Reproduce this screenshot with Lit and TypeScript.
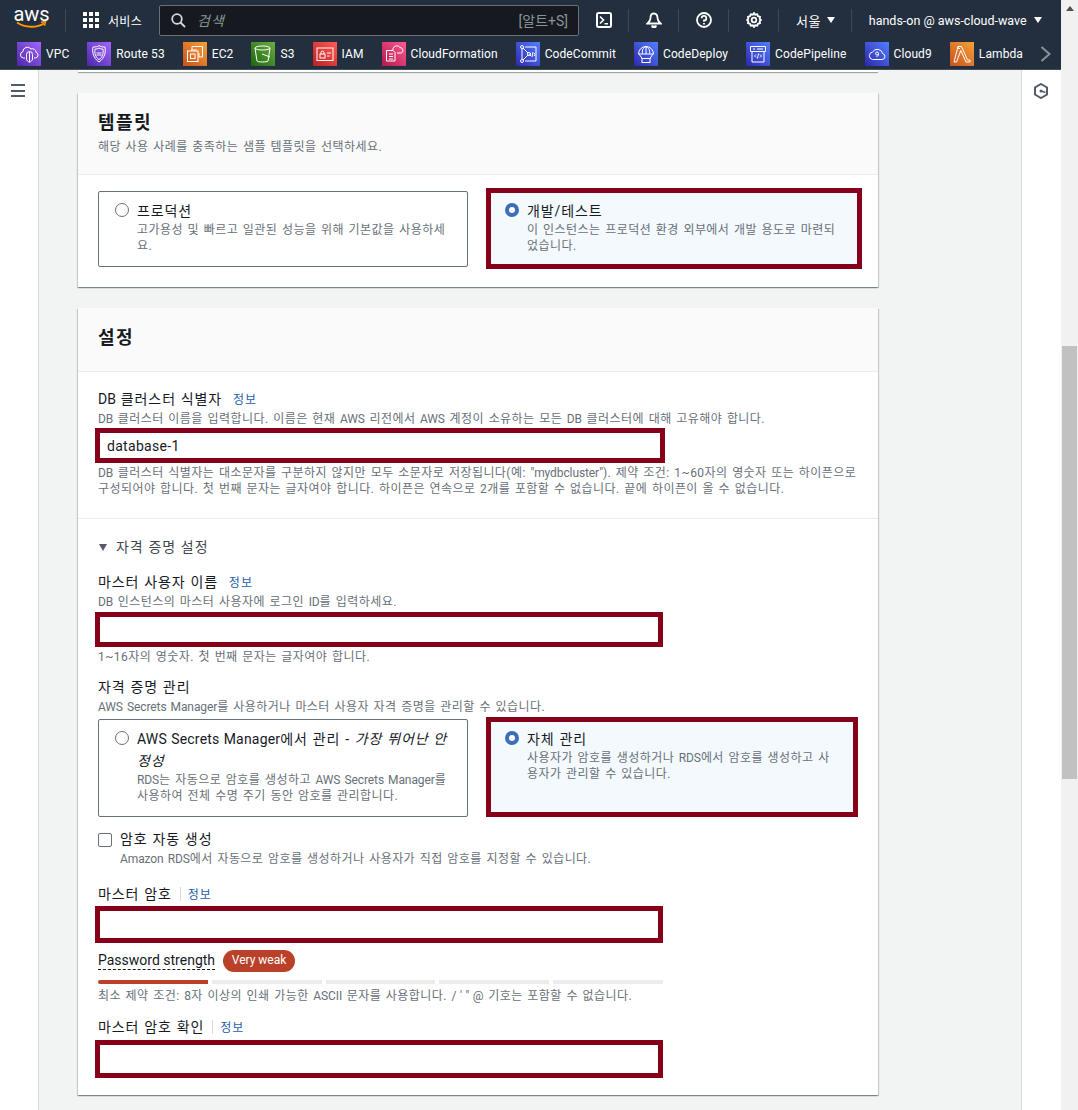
import { LitElement, css, html, svg } from "lit";
import { customElement } from "lit/decorators.js";

const services = [
  { name: "VPC", tone: "purple", icon: svg`<path d="M8 16H6.500a3.200 3.200 0 0 1-.6-6.300A4.500 4.500 0 0 1 14 7a3.600 3.600 0 0 1 5 3.200 3 3 0 0 1-.5 5.800H17"/><path d="M9.500 12.500a3 3 0 0 1 6 0v4.500c0 1.500-1.500 2.500-3 3.300-1.500-.8-3-1.800-3-3.300z"/><path d="M12.500 10v10"/>` },
  { name: "Route 53", tone: "purple", icon: svg`<path d="M12 3.500c1.500 1.300 3.200 1.500 6 1.500 1 5-.2 11-6 15-5.800-4-7-10-6-15 2.800 0 4.500-.2 6-1.500z"/><path d="M12 6c1 .8 2.200 1.100 4 1.100.6 3.700-.2 8-4 10.500-3.800-2.500-4.600-6.800-4-10.500 1.800 0 3-.3 4-1.100z"/><path d="M9.500 11h5M9.500 13h5"/>` },
  { name: "EC2", tone: "orange", icon: svg`<path d="M9 8V4.500h10.500V15H16"/><rect x="4.500" y="9" width="10.500" height="10.500"/><rect x="7.500" y="12" width="4.500" height="4.500"/><path d="M9 7v2M11 7v2M13 7v2M15 12h2M15 14h2"/>` },
  { name: "S3", tone: "green", icon: svg`<ellipse cx="11.500" cy="6" rx="7.500" ry="2"/><path d="M4 6l2 13c.5 1.300 10 1.300 11 0l2-13"/><path d="M11 12l8 3"/>` },
  { name: "IAM", tone: "red", icon: svg`<rect x="4" y="6" width="16" height="12.500"/><rect x="7" y="12" width="5" height="4"/><path d="M8 12v-1.500a1.500 1.500 0 0 1 3 0V12M14 11h4M14 14h2.500"/>` },
  { name: "CloudFormation", tone: "pink", icon: svg`<path d="M11 8V6.500a4 4 0 0 1 7-1 3 3 0 0 1 1.500 5.500H15"/><path d="M4.500 8.500H11l2 2v8.500H4.500z"/><path d="M7 12h4M7 14.500h4M7 17h4"/>` },
  { name: "CodeCommit", tone: "blue", icon: svg`<circle cx="6" cy="5" r="1.500"/><circle cx="6" cy="19" r="1.500"/><circle cx="13" cy="12" r="1.500"/><path d="M6 6.500v11M7 6l5 5M12 13l-5 5"/><path d="M9 5h11v14H9"/><path d="M15 14l-1.500-1.500L15 11M18 14l1-1.500L18 11M16 15l1-5"/>` },
  { name: "CodeDeploy", tone: "blue", icon: svg`<path d="M4.500 12a7.500 7.500 0 0 1 15 0z"/><path d="M12 4.500c-5 2-3.500 7.500-3.500 7.500M12 4.500c5 2 3.500 7.500 3.500 7.500M12 4.500V12"/><path d="M5 12l3.500 5M19 12l-3.500 5"/><rect x="8" y="16.500" width="8" height="4"/>` },
  { name: "CodePipeline", tone: "blue", icon: svg`<path d="M4.500 4.500h15v5h-15z"/><path d="M6 9.500v10.500h12V9.500"/><path d="M7 7h2M11 7h6"/><path d="M10 15.500l-1.500-1.500 1.500-1.500M14 15.500l1.500-1.500-1.500-1.500M11.300 16.500l1.400-5"/>` },
  { name: "Cloud9", tone: "blue", icon: svg`<path d="M7.500 17.500h9.500a3 3 0 0 0 .7-5.900A5.500 5.500 0 0 0 7.600 10a3.800 3.800 0 0 0-.1 7.500z"/><circle cx="12" cy="11.500" r="1.500"/><path d="M13.500 11.500c0 2-.7 3-2 3.300"/>` },
  { name: "Lambda", tone: "orange", icon: svg`<path d="M8 4.500h3.500l6 13.500H20v2h-4l-5.200-11.500L6.500 20H4z"/><path d="M8 4.500v2h2"/>` },
];

const input = (wide = false, value = "", tall = "") =>
  html`<div class="input ${wide ? "wide" : ""} ${tall}">${value}</div>`;

const radio = (on: boolean) => html`<span class="radio ${on ? "on" : ""}"></span>`;

@customElement("app-root")
export class AppRoot extends LitElement {
  renderNav() {
    return html`
      <header class="nav">
        <div class="top">
          <div class="logo">
            <span>aws</span>
            <svg width="31" height="8" viewBox="0 0 31 8" fill="none">
              <path d="M1 1.500c8 5.500 20 5.500 27 1" stroke="#f90" stroke-width="1.800"/>
              <path d="M25 1.200l4.500-.5-1 4" stroke="#f90" stroke-width="1.500"/>
            </svg>
          </div>
          <i class="sep first"></i>
          <div class="grid-icon">${Array.from({ length: 9 }, () => html`<b></b>`)}</div>
          <span class="services">서비스</span>
          <div class="search">
            <svg width="15" height="15" viewBox="0 0 15 15" fill="none" stroke="#d5dbdb" stroke-width="1.800">
              <circle cx="6" cy="6" r="4.800"/><path d="M9.500 9.500l4.500 4.500"/>
            </svg>
            <em>검색</em>
            <span>[알트+S]</span>
          </div>
          <svg class="tool shell" width="16" height="16" viewBox="0 0 16 16" fill="none" stroke="#fff" stroke-width="2">
            <rect x="1" y="1" width="14" height="14" rx="1.500"/><path d="M4 4.500L7.500 8 4 11.500M8.500 11.800h3.500" stroke-width="1.600"/>
          </svg>
          <i class="sep"></i>
          <svg class="tool" width="16" height="16" viewBox="0 0 16 16" fill="none" stroke="#fff" stroke-width="1.800">
            <path d="M8 1.500c-2.500 0-3.500 2-3.500 4.500 0 2.500-1.300 4-3 5.500h13c-1.700-1.500-3-3-3-5.500 0-2.500-1-4.500-3.500-4.500z"/><path d="M6 13.500a2 2 0 0 0 4 0" fill="#fff"/>
          </svg>
          <i class="sep"></i>
          <svg class="tool" width="16" height="16" viewBox="0 0 16 16" fill="none" stroke="#fff" stroke-width="1.800">
            <circle cx="8" cy="8" r="7"/><path d="M5.700 6.200A2.300 2.300 0 1 1 8 8.500v1.300M8 11v1.600"/>
          </svg>
          <i class="sep"></i>
          <svg class="tool" width="16" height="16" viewBox="0 0 16 16" fill="none" stroke="#fff" stroke-width="1.800">
            <path d="M8 1l1.200 1.700 2-.4.800 1.900 2 .6-.3 2L15 8l-1.300 1.200.3 2-2 .6-.8 1.900-2-.4L8 15l-1.200-1.700-2 .4-.8-1.900-2-.6.300-2L1 8l1.300-1.200-.3-2 2-.6.800-1.900 2 .4z"/><circle cx="8" cy="8" r="2.300"/>
          </svg>
          <i class="sep"></i>
          <span class="menu region">서울<u></u></span>
          <i class="sep"></i>
          <span class="menu account">hands-on @ aws-cloud-wave<u></u></span>
        </div>
        <div class="bar">
          ${services.map(
            (s) => html`
              <div class="svc">
                <span class="svc-icon ${s.tone}">
                  <svg width="24" height="24" viewBox="0 0 24 24" fill="none" stroke="#fff" stroke-width="1">${s.icon}</svg>
                </span>
                <span>${s.name}</span>
              </div>
            `
          )}
          <svg class="more" width="11" height="16" viewBox="0 0 11 16" fill="none" stroke="#879596" stroke-width="2"><path d="M1.500 1l8 7-8 7"/></svg>
        </div>
      </header>
    `;
  }

  renderTemplates() {
    return html`
      <section class="card">
        <div class="card-head tall">
          <h2>템플릿</h2>
          <p class="hint">해당 사용 사례를 충족하는 샘플 템플릿을 선택하세요.</p>
        </div>
        <div class="card-body">
          <div class="tiles">
            <div class="tile row1">
              ${radio(false)}
              <div><div class="tile-title">프로덕션</div><p class="hint">고가용성 및 빠르고 일관된 성능을 위해 기본값을 사용하세요.</p></div>
            </div>
            <div class="tile picked row1">
              ${radio(true)}
              <div><div class="tile-title">개발/테스트</div><p class="hint">이 인스턴스는 프로덕션 환경 외부에서 개발 용도로 마련되었습니다.</p></div>
            </div>
          </div>
        </div>
      </section>
    `;
  }

  renderSettings() {
    return html`
      <section class="card settings">
        <div class="card-head"><h2>설정</h2></div>
        <div class="block identifier">
          <div class="label"><span class="en">DB</span> 클러스터 식별자 <a>정보</a></div>
          <p class="hint"><span class="en">DB</span> 클러스터 이름을 입력합니다. 이름은 현재 <span class="en">AWS</span> 리전에서 <span class="en">AWS</span> 계정이 소유하는 모든 <span class="en">DB</span> 클러스터에 대해 고유해야 합니다.</p>
          ${input(true, "database-1")}
          <p class="hint after"><span class="en">DB</span> 클러스터 식별자는 대소문자를 구분하지 않지만 모두 소문자로 저장됩니다(예: <span class="en">"mydbcluster"</span>). 제약 조건: 1~60자의 영숫자 또는 하이픈으로 구성되어야 합니다. 첫 번째 문자는 글자여야 합니다. 하이픈은 연속으로 2개를 포함할 수 없습니다. 끝에 하이픈이 올 수 없습니다.</p>
        </div>
        <div class="block credentials">
          <div class="expander"><u></u>자격 증명 설정</div>
          <div class="label user">마스터 사용자 이름 <a>정보</a></div>
          <p class="hint"><span class="en">DB</span> 인스턴스의 마스터 사용자에 로그인 <span class="en">ID</span>를 입력하세요.</p>
          ${input()}
          <p class="hint after">1~16자의 영숫자. 첫 번째 문자는 글자여야 합니다.</p>
          <div class="label manage">자격 증명 관리</div>
          <p class="hint"><span class="en">AWS Secrets Manager</span>를 사용하거나 마스터 사용자 자격 증명을 관리할 수 있습니다.</p>
          <div class="tiles second">
            <div class="tile row2">
              ${radio(false)}
              <div>
                <div class="tile-title"><span class="en">AWS Secrets Manager</span>에서 관리 - <em>가장 뛰어난 안정성</em></div>
                <p class="hint"><span class="en">RDS</span>는 자동으로 암호를 생성하고 <span class="en">AWS Secrets Manager</span>를 사용하여 전체 수명 주기 동안 암호를 관리합니다.</p>
              </div>
            </div>
            <div class="tile picked row2">
              ${radio(true)}
              <div><div class="tile-title">자체 관리</div><p class="hint">사용자가 암호를 생성하거나 <span class="en">RDS</span>에서 암호를 생성하고 사용자가 관리할 수 있습니다.</p></div>
            </div>
          </div>
          <div class="check">
            <span class="box"></span>
            <div><div class="label">암호 자동 생성</div><p class="hint"><span class="en">Amazon RDS</span>에서 자동으로 암호를 생성하거나 사용자가 직접 암호를 지정할 수 있습니다.</p></div>
          </div>
          <div class="label pass">마스터 암호<i class="divider"></i><a>정보</a></div>
          ${input(false, "", "mid")}
          <div class="strength">
            <span class="dashed">Password strength</span>
            <span class="badge">Very weak</span>
          </div>
          <div class="meter"><b class="filled"></b><b></b><b></b><b></b><b></b></div>
          <p class="hint constraint">최소 제약 조건: 8자 이상의 인쇄 가능한 <span class="en">ASCII</span> 문자를 사용합니다. <span class="sym">/ ' " @</span> 기호는 포함할 수 없습니다.</p>
          <div class="label confirm">마스터 암호 확인<i class="divider"></i><a>정보</a></div>
          ${input(false, "", "big")}
        </div>
      </section>
    `;
  }

  render() {
    return html`
      <div class="page">
        <div class="viewport">
          ${this.renderNav()}
          <div class="content">
            <aside class="left"><i></i><i></i><i></i></aside>
            <main>
              <div class="stub"></div>
              ${this.renderTemplates()}
              ${this.renderSettings()}
            </main>
            <aside class="right">
              <svg width="14" height="16" viewBox="0 0 14 16" fill="none" stroke="#545b64" stroke-width="2">
                <path d="M7 1l6 3.500v7L7 15l-6-3.500v-7z"/><circle cx="7" cy="8" r="1.500" fill="#545b64" stroke="none"/><path d="M7 8l4.500 1.500" stroke-width="1.500"/>
              </svg>
            </aside>
          </div>
        </div>
        <div class="scrollbar"><span class="arrow"></span><span class="thumb"></span></div>
      </div>
    `;
  }

  static styles = css`
    :host {
      display: block;
      font-family: Roboto, "Noto Sans CJK KR", sans-serif;
      font-size: 14px;
      color: #16191f;
    }

    * {
      box-sizing: border-box;
    }

    .page {
      display: flex;
      width: 1078px;
      height: 1110px;
      overflow: hidden;
    }

    .viewport {
      width: 1061px;
      display: flex;
      flex-direction: column;
    }

    .scrollbar {
      width: 17px;
      background: #f1f1f1;
      display: flex;
      flex-direction: column;
      align-items: center;
    }

    .arrow {
      margin-top: 6px;
      border: 4px solid transparent;
      border-top: 0;
      border-bottom: 5px solid #505050;
    }

    .thumb {
      width: 15px;
      height: 433px;
      margin-top: 335px;
      background: #c1c1c1;
    }

    .nav {
      height: 70px;
      flex: none;
      background: #232f3e;
      border-bottom: 1px solid #454f5b;
      color: #fff;
    }

    .top {
      height: 40px;
      display: flex;
      align-items: center;
      padding-left: 16px;
    }

    .logo {
      width: 31px;
      display: flex;
      flex-direction: column;
      align-items: center;
      line-height: 15px;
      font-size: 20px;
      margin-top: -4px;
    }

    .logo svg {
      margin-top: -1px;
    }

    .sep {
      width: 1px;
      height: 23px;
      background: #414750;
      margin: 0 17px 0 16px;
    }

    .sep.first {
      margin: 0 17px 0 18px;
    }

    .grid-icon {
      display: grid;
      grid-template-columns: repeat(3, 4px);
      gap: 2px;
    }

    .grid-icon b {
      height: 4px;
      background: #fff;
    }

    .services {
      font-size: 12px;
      letter-spacing: 0.3px;
      margin-left: 9px;
    }

    .search {
      width: 420px;
      height: 31px;
      margin: 0 17px;
      padding: 0 10px 0 11px;
      display: flex;
      align-items: center;
      background: #16191f;
      border: 1px solid #687078;
      border-radius: 2px;
      color: #879596;
      font-size: 14px;
    }

    .search em {
      margin-left: 11px;
      flex: 1;
      letter-spacing: 1px;
    }

    .tool {
      flex: none;
    }

    .menu {
      font-size: 12.5px;
      display: flex;
      align-items: center;
      gap: 7px;
    }

    .region {
      font-size: 13px;
      letter-spacing: 0.4px;
      gap: 6px;
    }

    .menu u {
      width: 0;
      height: 0;
      border: 4.500px solid transparent;
      border-top: 6px solid #fff;
      border-bottom: 0;
    }

    .bar {
      height: 29px;
      display: flex;
      align-items: center;
      gap: 18px;
      padding: 0 0 1px 17px;
      font-size: 12px;
      letter-spacing: 0.1px;
    }

    .svc {
      display: flex;
      align-items: center;
      gap: 5px;
      white-space: nowrap;
    }

    .svc-icon {
      width: 24px;
      height: 24px;
      display: block;
    }

    .svc-icon svg {
      display: block;
    }

    .purple { background: linear-gradient(45deg, #4d27a8, #a166ff); }
    .orange { background: linear-gradient(45deg, #c8511b, #f5a13a); }
    .green { background: linear-gradient(45deg, #1b660f, #6cae3e); }
    .red { background: linear-gradient(45deg, #bd1e23, #ff5c52); }
    .pink { background: linear-gradient(45deg, #b0184d, #ff5c8f); }
    .blue { background: linear-gradient(45deg, #2e27ad, #527fff); }

    .more {
      margin-left: -1px;
      flex: none;
    }

    .content {
      flex: 1;
      display: flex;
      min-height: 0;
      background: #f2f3f3;
    }

    .left {
      width: 39px;
      flex: none;
      background: #fff;
      border-right: 1px solid #d5dbdb;
      padding: 14px 0 0 11px;
    }

    .left i {
      display: block;
      width: 14px;
      height: 2px;
      background: #545b64;
      margin-bottom: 3.500px;
    }

    .right {
      width: 40px;
      flex: none;
      background: #fff;
      border-left: 1px solid #d5dbdb;
      padding: 13px 0 0 12px;
    }

    main {
      flex: 1;
      padding-left: 39px;
    }

    .stub {
      width: 800px;
      height: 2px;
      background: #fff;
      box-shadow: 0 1px 1px rgba(0, 28, 36, 0.4);
      margin-bottom: 21px;
    }

    .card {
      width: 800px;
      background: #fff;
      box-shadow: 0 1px 1px rgba(0, 28, 36, 0.3), 1px 1px 1px rgba(0, 28, 36, 0.15), -1px 1px 1px rgba(0, 28, 36, 0.15);
    }

    .settings {
      margin-top: 21px;
    }

    .card-head {
      height: 64px;
      padding: 17px 20px 0;
      background: #fafafa;
      border-bottom: 1px solid #eaeded;
    }

    .card-head.tall {
      height: 82px;
      padding-top: 17px;
    }

    h2 {
      margin: 0;
      font-size: 18px;
      line-height: 26px;
      font-weight: 700;
      letter-spacing: 1.4px;
    }

    .tall h2 {
      margin-bottom: 3px;
    }

    .hint {
      margin: 0;
      font-size: 12px;
      line-height: 16px;
      color: #687078;
      letter-spacing: 0.45px;
      word-spacing: 1.2px;
    }

    .en {
      letter-spacing: -0.1px;
    }

    .sym {
      letter-spacing: 0;
      word-spacing: 0.5px;
    }

    .card-body {
      padding: 13px 16px 18px 20px;
    }

    .tiles {
      display: flex;
      gap: 18px;
      align-items: flex-start;
    }

    .tile {
      display: flex;
      gap: 8px;
      width: 370px;
      padding: 8px 16px 0;
      border: 1px solid #687078;
      border-radius: 2px;
    }

    .tile-title {
      line-height: 22px;
      letter-spacing: 0.9px;
      word-spacing: 0.5px;
    }

    .tile-title .en {
      letter-spacing: 0.2px;
    }

    .tile-title em {
      font-style: italic;
    }

    .tile.row1 {
      height: 76px;
      margin-top: 3px;
    }

    .tile.row2 {
      height: 98px;
      margin-top: 2px;
    }

    .tile.picked {
      border: 5px solid #87001a;
      border-radius: 0;
      background: #f4f9fe;
      padding: 7px 20px 0 14px;
      margin-top: 0;
    }

    .tile.picked.row1 {
      width: 376px;
      height: 81px;
    }

    .tile.picked.row2 {
      width: 372px;
      height: 100px;
      padding-top: 6px;
    }

    .radio {
      flex: none;
      width: 14px;
      height: 14px;
      margin-top: 3px;
      border-radius: 50%;
      border: 1.500px solid #687078;
      background: #fff;
    }

    .radio.on {
      border: 4px solid #3d6db5;
    }

    .block {
      padding: 17px 20px 21px;
    }

    .identifier {
      border-bottom: 1px solid #eaeded;
    }

    .credentials {
      padding: 18px 20px 17px;
    }

    .label {
      line-height: 20px;
      margin-bottom: 1px;
      letter-spacing: 0.9px;
      word-spacing: 0.5px;
    }

    .label .en {
      letter-spacing: 0;
    }

    .label a {
      color: #1f5fa8;
      font-size: 12px;
      margin-left: 6px;
      letter-spacing: 1px;
    }

    .label .divider + a {
      margin-left: 0;
    }

    .divider {
      display: inline-block;
      width: 1px;
      height: 14px;
      background: #d5dbdb;
      margin: 0 7px 0 8px;
      vertical-align: -2px;
    }

    .input {
      height: 35px;
      margin: 1px 0 0 -3px;
      width: 568px;
      border: 5px solid #87001a;
      background: #fff;
      padding: 1px 0 0 7px;
      line-height: 25px;
      letter-spacing: 0.3px;
    }

    .input.wide {
      width: 570px;
    }

    .input.mid {
      height: 37px;
    }

    .input.big {
      height: 38px;
    }

    .after {
      margin-top: 2px;
    }

    .expander {
      display: flex;
      align-items: center;
      line-height: 20px;
      color: #414750;
      letter-spacing: 0.9px;
      word-spacing: 0.5px;
    }

    .expander u {
      width: 0;
      height: 0;
      margin: 0 9px 0 1px;
      border: 4.500px solid transparent;
      border-top: 7px solid #545b64;
      border-bottom: 0;
    }

    .label.user {
      margin-top: 15px;
    }

    .credentials .user + .hint + .input {
      margin-top: 2px;
    }

    .label.manage {
      margin: 12px 0 2px;
    }

    .tiles.second {
      margin-top: 2px;
    }

    .check {
      display: flex;
      gap: 8px;
      margin-top: 12px;
    }

    .check .label {
      margin-bottom: 2px;
    }

    .box {
      flex: none;
      width: 14px;
      height: 14px;
      margin-top: 4px;
      border: 1.500px solid #687078;
      border-radius: 2px;
    }

    .label.pass {
      margin-top: 17px;
    }

    .label.confirm {
      margin-top: 13px;
    }

    .label.pass + .input {
      margin-top: 1px;
    }

    .label.confirm + .input {
      margin-top: 2px;
    }

    .strength {
      display: flex;
      align-items: center;
      gap: 8px;
      margin-top: 7px;
      height: 22px;
    }

    .dashed {
      line-height: 17px;
      border-bottom: 1px dashed #16191f;
    }

    .badge {
      height: 22px;
      width: 72px;
      border-radius: 11px;
      background: #b9412a;
      color: #fff;
      font-size: 12px;
      line-height: 21px;
      text-align: center;
    }

    .meter {
      display: grid;
      grid-template-columns: repeat(5, 1fr);
      gap: 4px;
      width: 565px;
      margin-top: 8px;
    }

    .meter b {
      height: 4px;
      background: #ececec;
    }

    .meter b.filled {
      background: #b9412a;
      border-radius: 2px 0 0 2px;
    }

    .constraint {
      margin-top: 4px;
    }
  `;
}

declare global {
  interface HTMLElementTagNameMap {
    "app-root": AppRoot;
  }
}
